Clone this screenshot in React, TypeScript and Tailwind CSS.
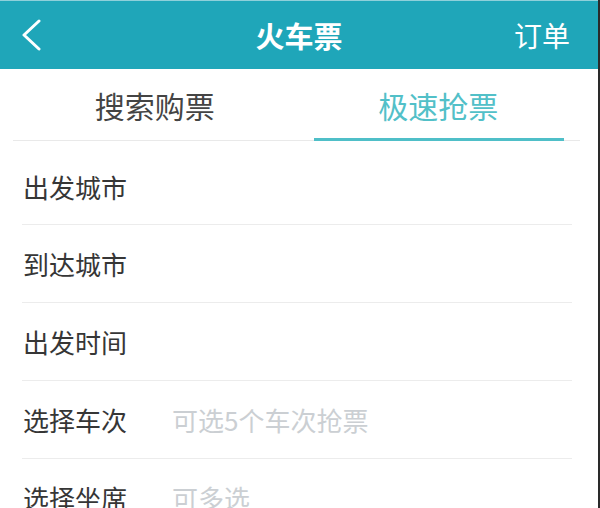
import React from 'react';

const rows = [
  { label: '出发城市', hint: '' },
  { label: '到达城市', hint: '' },
  { label: '出发时间', hint: '' },
  { label: '选择车次', hint: '可选5个车次抢票' },
  { label: '选择坐席', hint: '可多选' },
];

function BackIcon() {
  return (
    <svg width="22" height="32" viewBox="0 0 22 32" fill="none">
      <polyline points="19,2 4,16 19,30" stroke="white" strokeWidth="3" strokeLinecap="round" strokeLinejoin="round" />
    </svg>
  );
}

export default function App() {
  return (
    <div
      className="w-[600px] h-[508px] overflow-hidden bg-white border-r-2 border-[#2a2a2a]"
      style={{ fontFamily: '"Noto Sans CJK SC", "Noto Sans", sans-serif' }}
    >
      {/* header */}
      <div className="h-[69px] bg-[#1fa6b9] border-t border-[#8fd0da] grid grid-cols-[120px_1fr_120px] items-center">
        <div className="pl-[20px] flex items-center">
          <BackIcon />
        </div>
        <h1 className="text-center text-white text-[29px] font-bold leading-none">火车票</h1>
        <div className="text-right pr-[28px] text-white text-[28px] leading-none">订单</div>
      </div>

      {/* tabs */}
      <div className="ml-[13px] mr-[18px] h-[72px] grid grid-cols-2 border-b border-[#e9e9e9]">
        <button className="flex items-center justify-center text-[30px] text-[#444] leading-none">搜索购票</button>
        <button className="relative flex items-center justify-center text-[30px] text-[#52c0c8] leading-none">
          极速抢票
          <span className="absolute left-[17px] right-[16px] bottom-[-1px] h-[3px] bg-[#4fbfc8]" />
        </button>
      </div>

      {/* form rows */}
      <div className="ml-[22px] mr-[26px]">
        {rows.map((r, i) => (
          <div
            key={r.label}
            className={
              i === 0
                ? 'h-[84px] pt-[8px] flex items-center border-b border-[#ececec]'
                : 'h-[78px] flex items-center border-b border-[#ececec]'
            }
          >
            <span className="w-[150px] shrink-0 pl-[1px] text-[26px] text-[#363636] leading-none">{r.label}</span>
            <span className="text-[26px] text-[#cbcfd3] leading-none">{r.hint}</span>
          </div>
        ))}
      </div>
    </div>
  );
}
